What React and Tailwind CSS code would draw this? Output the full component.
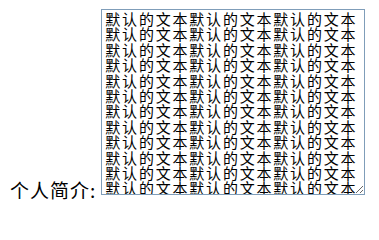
export default function App() {
    const text = "默认的文本".repeat(36);
    return (
        <div className="min-h-screen bg-white pl-[10px] pt-[9px]">
            <div className="flex items-end">
                <span className="mb-[-6px] text-[19px] leading-[22px] tracking-[1px] text-black font-['Noto_Sans_CJK_SC',sans-serif]">
                    个人简介:
                </span>
                <textarea
                    readOnly
                    defaultValue={text}
                    className="ml-[5px] h-[186px] w-[264px] resize overflow-hidden border border-[#7f9db9] bg-white px-[3px] py-[1px] text-[15px] leading-[15.4px] tracking-[1.8px] text-black outline-none font-['Noto_Sans_CJK_SC',sans-serif]"
                />
            </div>
        </div>
    );
}
